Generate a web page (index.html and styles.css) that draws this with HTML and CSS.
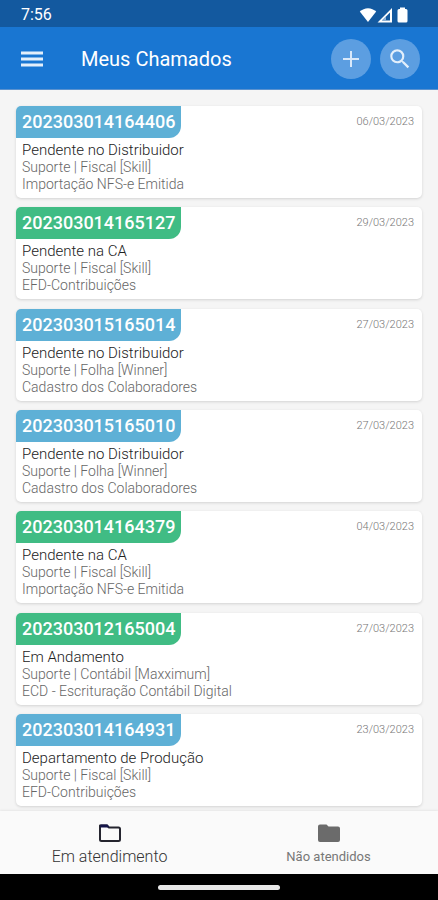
FILE: index.html
```html
<!DOCTYPE html>
<html lang="pt-BR">
<head>
    <meta charset="UTF-8">
    <meta name="viewport" content="width=device-width, initial-scale=1.0">
    <title>Meus Chamados</title>
    <link rel="stylesheet" href="styles.css">
</head>
<body>
    <div class="status-bar">
        <span class="clock">7:56</span>
        <div class="status-icons">
            <svg width="18" height="16" viewBox="0 0 18 16"><path fill="#fff" d="M9 15 0.8 4.6C3 2.5 6 1.2 9 1.2s6 1.3 8.2 3.4z"/></svg>
            <svg width="16" height="16" viewBox="0 0 16 16"><path fill="#fff" fill-rule="evenodd" d="M15 1v14.5H0.5zM13 5.500 5 13.600h8z"/><path fill="#8fb3d9" d="M5 13.600 9 9.600v4z"/></svg>
            <svg width="18" height="16" viewBox="0 0 18 16"><path fill="#fff" d="M7 0.500h5V2h1a1.500 1.500 0 0 1 1.500 1.500v10.500a1.500 1.500 0 0 1-1.500 1.500H6A1.500 1.500 0 0 1 4.500 14V3.500A1.500 1.500 0 0 1 6 2h1z"/></svg>
        </div>
    </div>

    <header class="app-bar">
        <button class="menu-button" aria-label="Menu">
            <svg width="22" height="16" viewBox="0 0 22 16"><path fill="#e3effb" d="M0 0.500h22v3H0zM0 6.500h22v3H0zM0 12.500h22v3H0z"/></svg>
        </button>
        <h1>Meus Chamados</h1>
        <button class="round-button" aria-label="Novo chamado">
            <svg width="24" height="24" viewBox="0 0 24 24"><path fill="none" stroke="#d8e8fa" stroke-width="2" d="M12 4v16M4 12h16"/></svg>
        </button>
        <button class="round-button" aria-label="Pesquisar">
            <svg width="26" height="26" viewBox="0 0 24 24"><path fill="#e3effb" d="M15.500 14h-.79l-.28-.27A6.471 6.471 0 0 0 16 9.500 6.500 6.500 0 1 0 9.500 16c1.610 0 3.090-.59 4.230-1.570l.27.28v.79l5 4.990L20.490 19l-4.990-5zm-6 0C7.010 14 5 11.990 5 9.500S7.010 5 9.500 5 14 7.010 14 9.500 11.990 14 9.500 14z"/></svg>
        </button>
    </header>

    <main class="ticket-list">
        <article class="ticket">
            <div class="ticket-top">
                <h2 class="ticket-number">202303014164406</h2>
                <time class="ticket-date">06/03/2023</time>
            </div>
            <div class="ticket-info">
                <p class="ticket-status">Pendente no Distribuidor</p>
                <p>Suporte | Fiscal [Skill]</p>
                <p>Importação NFS-e Emitida</p>
            </div>
        </article>
        <article class="ticket">
            <div class="ticket-top">
                <h2 class="ticket-number green">202303014165127</h2>
                <time class="ticket-date">29/03/2023</time>
            </div>
            <div class="ticket-info">
                <p class="ticket-status">Pendente na CA</p>
                <p>Suporte | Fiscal [Skill]</p>
                <p>EFD-Contribuições</p>
            </div>
        </article>
        <article class="ticket">
            <div class="ticket-top">
                <h2 class="ticket-number">202303015165014</h2>
                <time class="ticket-date">27/03/2023</time>
            </div>
            <div class="ticket-info">
                <p class="ticket-status">Pendente no Distribuidor</p>
                <p>Suporte | Folha [Winner]</p>
                <p>Cadastro dos Colaboradores</p>
            </div>
        </article>
        <article class="ticket">
            <div class="ticket-top">
                <h2 class="ticket-number">202303015165010</h2>
                <time class="ticket-date">27/03/2023</time>
            </div>
            <div class="ticket-info">
                <p class="ticket-status">Pendente no Distribuidor</p>
                <p>Suporte | Folha [Winner]</p>
                <p>Cadastro dos Colaboradores</p>
            </div>
        </article>
        <article class="ticket">
            <div class="ticket-top">
                <h2 class="ticket-number green">202303014164379</h2>
                <time class="ticket-date">04/03/2023</time>
            </div>
            <div class="ticket-info">
                <p class="ticket-status">Pendente na CA</p>
                <p>Suporte | Fiscal [Skill]</p>
                <p>Importação NFS-e Emitida</p>
            </div>
        </article>
        <article class="ticket">
            <div class="ticket-top">
                <h2 class="ticket-number green">202303012165004</h2>
                <time class="ticket-date">27/03/2023</time>
            </div>
            <div class="ticket-info">
                <p class="ticket-status">Em Andamento</p>
                <p>Suporte | Contábil [Maxximum]</p>
                <p>ECD - Escrituração Contábil Digital</p>
            </div>
        </article>
        <article class="ticket">
            <div class="ticket-top">
                <h2 class="ticket-number">202303014164931</h2>
                <time class="ticket-date">23/03/2023</time>
            </div>
            <div class="ticket-info">
                <p class="ticket-status">Departamento de Produção</p>
                <p>Suporte | Fiscal [Skill]</p>
                <p>EFD-Contribuições</p>
            </div>
        </article>
    </main>

    <nav class="tabs">
        <a href="#" class="tab active">
            <svg width="24" height="20" viewBox="0 0 24 20"><path fill="none" stroke="#25252f" stroke-width="2" stroke-linejoin="round" d="M2 2.500h7l2 2h9.500a1.500 1.500 0 0 1 1.500 1.500v10.500a1.500 1.500 0 0 1-1.500 1.500h-17A1.500 1.500 0 0 1 2 16.500z"/><path fill="#15154a" d="M2.500 1.500h7l2 3H2z"/></svg>
            <span>Em atendimento</span>
        </a>
        <a href="#" class="tab">
            <svg width="24" height="20" viewBox="0 0 24 20"><path fill="#6b6b6b" d="M3 1.500h6.500l2 2H21a2 2 0 0 1 2 2V17a2 2 0 0 1-2 2H3a2 2 0 0 1-2-2V3.500a2 2 0 0 1 2-2z"/></svg>
            <span>Não atendidos</span>
        </a>
    </nav>

    <div class="system-bar">
        <div class="home-handle"></div>
    </div>
</body>
</html>
```
FILE: styles.css
```css
:root {
    --primary: #1976d2;
    --primary-dark: #13599f;
    --page-bg: #f5f5f5;
    --blue: #5eb0d6;
    --green: #40bc84;
}

* {
    box-sizing: border-box;
}

body {
    font-family: Roboto, sans-serif;
    background: var(--page-bg);
    margin: 0;
    min-height: 100vh;
    display: flex;
    flex-direction: column;
}

h1, h2, p {
    margin: 0;
}

button {
    border: none;
    padding: 0;
    cursor: pointer;
}

/* Status bar */
.status-bar {
    display: flex;
    align-items: center;
    justify-content: space-between;
    height: 27px;
    padding: 2px 27px 0 21px;
    background: var(--primary-dark);
    color: #fff;
}

.clock {
    font-size: 16px;
    line-height: 20px;
    font-weight: 400;
}

.status-icons {
    display: flex;
}

/* App bar */
.app-bar {
    display: flex;
    align-items: center;
    gap: 9px;
    height: 63px;
    padding: 1px 18px 0 21px;
    background: var(--primary);
    border-bottom: 1px solid #5b92cf;
    color: #fff;
}

.menu-button {
    display: flex;
    margin-right: 29px;
    background: none;
}

.app-bar h1 {
    flex: 1;
    font-size: 20px;
    font-weight: 400;
}

.round-button {
    display: flex;
    align-items: center;
    justify-content: center;
    width: 40px;
    height: 40px;
    border-radius: 50%;
    background: #5c9ee1;
}

/* Tickets */
.ticket-list {
    flex: 1;
    display: flex;
    flex-direction: column;
    justify-content: space-between;
    padding: 16px 16px 5px;
}

.ticket {
    height: 92px;
    background: #fff;
    border-radius: 5px;
    box-shadow: 0 1px 3px rgba(0, 0, 0, 0.14);
    overflow: hidden;
}

.ticket-top {
    display: flex;
    justify-content: space-between;
}

.ticket-number {
    padding: 0 6px;
    border-bottom-right-radius: 12px;
    background: var(--blue);
    color: #fff;
    font-size: 18px;
    line-height: 32px;
    font-weight: 500;
}

.ticket-number.green {
    background: var(--green);
}

.ticket-date {
    padding: 9px 8px 0 0;
    color: #777;
    font-size: 11px;
    line-height: 14px;
    font-weight: 300;
}

.ticket-info {
    padding: 4px 6px;
    color: #666;
    font-size: 14px;
    line-height: 17px;
    font-weight: 300;
}

.ticket-status {
    color: #222;
    font-size: 15px;
}

/* Bottom tabs */
.tabs {
    display: flex;
    height: 63px;
    background: #fafafa;
    box-shadow: 0 -1px 2px rgba(0, 0, 0, 0.06);
}

.tab {
    flex: 1;
    display: flex;
    flex-direction: column;
    align-items: center;
    padding-top: 12px;
    color: #777;
    font-size: 13px;
    line-height: 28px;
    text-decoration: none;
}

.tab.active {
    color: #333;
    font-size: 16px;
    font-weight: 300;
}

.system-bar {
    display: flex;
    align-items: center;
    justify-content: center;
    height: 26px;
    background: #000;
}

.home-handle {
    width: 122px;
    height: 5px;
    border-radius: 3px;
    background: #e8e8e8;
}
```
